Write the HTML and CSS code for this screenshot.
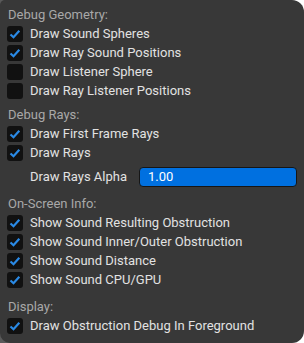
FILE: index.html
```html
<!DOCTYPE html>
<html lang="en">
<head>
    <meta charset="UTF-8">
    <title>Debug Options</title>
    <link rel="stylesheet" href="styles.css">
</head>
<body>
    <div class="panel">
        <div class="section">
            <div class="section-title">Debug Geometry:</div>
            <label class="check-row"><span class="box on"></span>Draw Sound Spheres</label>
            <label class="check-row"><span class="box on"></span>Draw Ray Sound Positions</label>
            <label class="check-row"><span class="box"></span>Draw Listener Sphere</label>
            <label class="check-row"><span class="box"></span>Draw Ray Listener Positions</label>
        </div>

        <div class="section">
            <div class="section-title">Debug Rays:</div>
            <label class="check-row"><span class="box on"></span>Draw First Frame Rays</label>
            <label class="check-row"><span class="box on"></span>Draw Rays</label>
            <div class="field-row">
                <span class="field-label">Draw Rays Alpha</span>
                <span class="field-input">1.00</span>
            </div>
        </div>

        <div class="section">
            <div class="section-title">On-Screen Info:</div>
            <label class="check-row"><span class="box on"></span>Show Sound Resulting Obstruction</label>
            <label class="check-row"><span class="box on"></span>Show Sound Inner/Outer Obstruction</label>
            <label class="check-row"><span class="box on"></span>Show Sound Distance</label>
            <label class="check-row"><span class="box on"></span>Show Sound CPU/GPU</label>
        </div>

        <div class="section section-last">
            <div class="section-title">Display:</div>
            <label class="check-row"><span class="box on"></span>Draw Obstruction Debug In Foreground</label>
        </div>
    </div>
</body>
</html>
```

FILE: styles.css
```css
html, body {
    margin: 0;
    height: 100%;
}
body {
    background: linear-gradient(to right, #5a5a5a 0, #5a5a5a 14px, #ffffff 14px);
    font-family: Roboto, "Noto Sans", sans-serif;
    font-size: 13px;
}
.panel {
    box-sizing: border-box;
    width: 304px;
    height: 343px;
    background: #383838;
    border-radius: 5px 12px 12px 10px;
    padding: 5px 0 0 0;
}
.section {
    margin-bottom: 5px;
}
.section-last {
    margin-top: 8px;
}
.section-title {
    height: 19px;
    line-height: 19px;
    padding-left: 8px;
    color: #a8a8a8;
}
.check-row {
    display: flex;
    align-items: center;
    height: 19px;
    padding-left: 7px;
    color: #e2e2e2;
}
.box {
    width: 16px;
    height: 16px;
    border-radius: 3px;
    background: #111111;
    margin-right: 7px;
    flex: none;
}
.box.on {
    background: #111111 url("data:image/svg+xml,%3Csvg xmlns='http://www.w3.org/2000/svg' width='16' height='16'%3E%3Cpath d='M3.5 8.5 L6.5 11.2 L12.3 4.8' fill='none' stroke='%232a8ae6' stroke-width='2.2'/%3E%3C/svg%3E") no-repeat center;
}
.field-row {
    display: flex;
    align-items: center;
    height: 25px;
    margin-top: 2px;
    margin-bottom: 1px;
    padding-left: 30px;
    color: #e2e2e2;
}
.field-label {
    width: 109px;
}
.field-input {
    box-sizing: border-box;
    width: 158px;
    height: 20px;
    line-height: 18px;
    background: #0070e0;
    border: 1px solid #161616;
    border-radius: 4px;
    padding-left: 8px;
    color: #ffffff;
}
```
